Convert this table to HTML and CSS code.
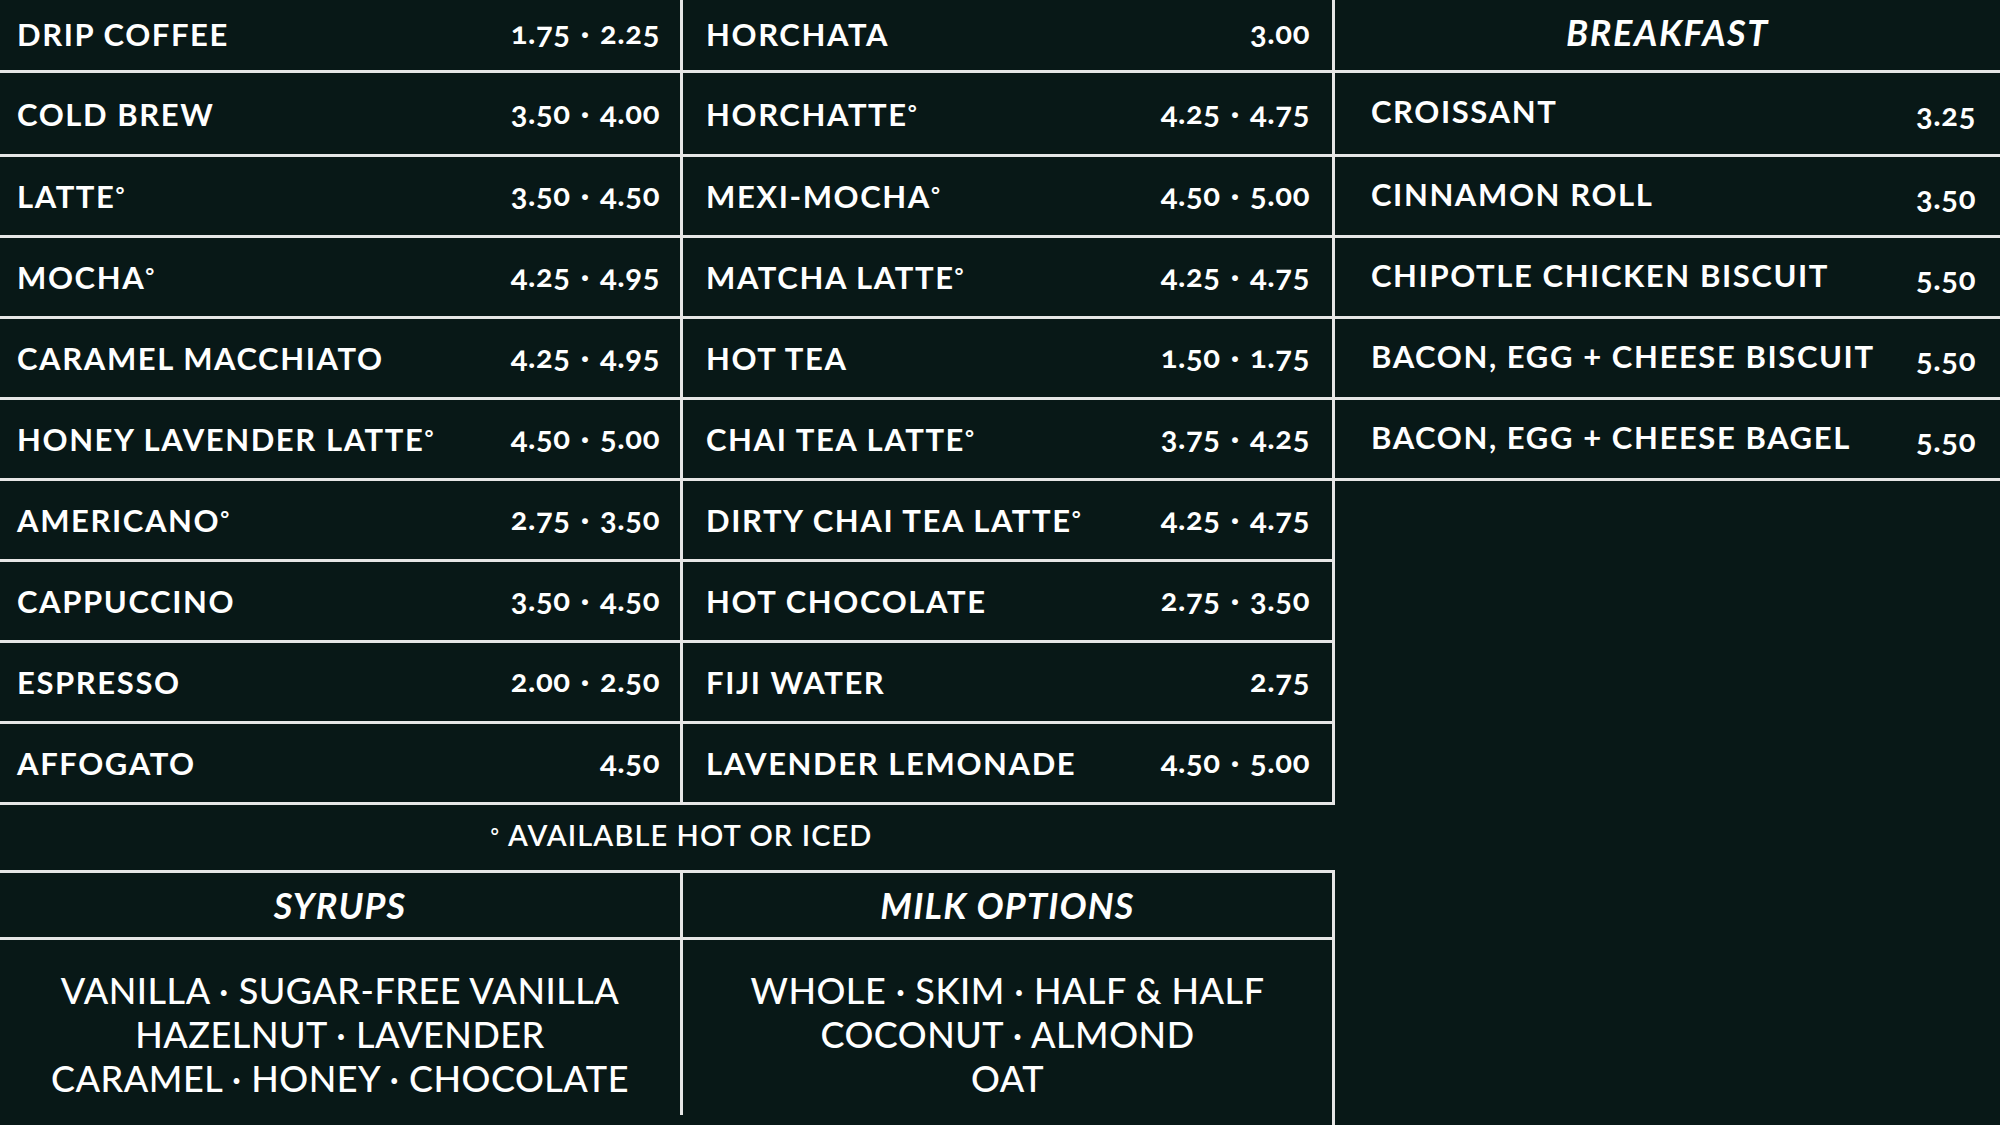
FILE: index.html
```html
<!DOCTYPE html>
<html lang="en">
<head>
<meta charset="utf-8">
<title>Menu Board</title>
<link rel="stylesheet" href="styles.css">
</head>
<body>
<div class="board">
  <div class="left">
    <div class="drinks">
      <div class="col col-a">
        <div class="row"><span class="name">DRIP COFFEE</span><span class="price">1.75 · 2.25</span></div>
        <div class="row"><span class="name">COLD BREW</span><span class="price">3.50 · 4.00</span></div>
        <div class="row"><span class="name">LATTE<span class="deg">°</span></span><span class="price">3.50 · 4.50</span></div>
        <div class="row"><span class="name">MOCHA<span class="deg">°</span></span><span class="price">4.25 · 4.95</span></div>
        <div class="row"><span class="name">CARAMEL MACCHIATO</span><span class="price">4.25 · 4.95</span></div>
        <div class="row"><span class="name">HONEY LAVENDER LATTE<span class="deg">°</span></span><span class="price">4.50 · 5.00</span></div>
        <div class="row"><span class="name">AMERICANO<span class="deg">°</span></span><span class="price">2.75 · 3.50</span></div>
        <div class="row"><span class="name">CAPPUCCINO</span><span class="price">3.50 · 4.50</span></div>
        <div class="row"><span class="name">ESPRESSO</span><span class="price">2.00 · 2.50</span></div>
        <div class="row"><span class="name">AFFOGATO</span><span class="price">4.50</span></div>
      </div>
      <div class="col col-b">
        <div class="row"><span class="name">HORCHATA</span><span class="price">3.00</span></div>
        <div class="row"><span class="name">HORCHATTE<span class="deg">°</span></span><span class="price">4.25 · 4.75</span></div>
        <div class="row"><span class="name">MEXI-MOCHA<span class="deg">°</span></span><span class="price">4.50 · 5.00</span></div>
        <div class="row"><span class="name">MATCHA LATTE<span class="deg">°</span></span><span class="price">4.25 · 4.75</span></div>
        <div class="row"><span class="name">HOT TEA</span><span class="price">1.50 · 1.75</span></div>
        <div class="row"><span class="name">CHAI TEA LATTE<span class="deg">°</span></span><span class="price">3.75 · 4.25</span></div>
        <div class="row"><span class="name">DIRTY CHAI TEA LATTE<span class="deg">°</span></span><span class="price">4.25 · 4.75</span></div>
        <div class="row"><span class="name">HOT CHOCOLATE</span><span class="price">2.75 · 3.50</span></div>
        <div class="row"><span class="name">FIJI WATER</span><span class="price">2.75</span></div>
        <div class="row"><span class="name">LAVENDER LEMONADE</span><span class="price">4.50 · 5.00</span></div>
      </div>
    </div>
    <div class="note"><span class="note-deg">°</span>AVAILABLE HOT OR ICED</div>
    <div class="options">
      <div class="opt opt-syrups">
        <div class="opt-head">SYRUPS</div>
        <div class="opt-body">VANILLA · SUGAR-FREE VANILLA<br>HAZELNUT · LAVENDER<br>CARAMEL · HONEY · CHOCOLATE</div>
      </div>
      <div class="opt opt-milk">
        <div class="opt-head">MILK OPTIONS</div>
        <div class="opt-body">WHOLE · SKIM · HALF &amp; HALF<br>COCONUT · ALMOND<br>OAT</div>
      </div>
    </div>
  </div>
  <div class="right">
    <div class="bf-head">BREAKFAST</div>
    <div class="row bf-row"><span class="name">CROISSANT</span><span class="price">3.25</span></div>
    <div class="row bf-row"><span class="name">CINNAMON ROLL</span><span class="price">3.50</span></div>
    <div class="row bf-row"><span class="name">CHIPOTLE CHICKEN BISCUIT</span><span class="price">5.50</span></div>
    <div class="row bf-row"><span class="name">BACON, EGG + CHEESE BISCUIT</span><span class="price">5.50</span></div>
    <div class="row bf-row"><span class="name">BACON, EGG + CHEESE BAGEL</span><span class="price">5.50</span></div>
  </div>
</div>
</body>
</html>
```

FILE: styles.css
```css
* { box-sizing: border-box; }

html, body {
  margin: 0;
  padding: 0;
  background: #081817;
}

.board {
  display: flex;
  width: 2000px;
  height: 1125px;
  overflow: hidden;
  background: #081817;
  color: #ffffff;
  font-family: Lato, "Open Sans", "Liberation Sans", sans-serif;
}

.left {
  width: 1335px;
  display: flex;
  flex-direction: column;
}

.drinks {
  display: flex;
}

.col {
  display: flex;
  flex-direction: column;
  border-right: 3px solid #e6e6e6;
}

.col-a { width: 683px; }
.col-b { width: 652px; }

.row {
  display: flex;
  justify-content: space-between;
  align-items: center;
  height: 81px;
  border-bottom: 3px solid #e6e6e6;
}

.row:first-child { height: 73px; padding-bottom: 3px; }
.row:nth-child(2) { height: 84px; }

.col-a .row { padding-left: 17px; padding-right: 20px; }
.col-b .row { padding-left: 23px; padding-right: 22px; }

.name {
  font-size: 31px;
  font-weight: 700;
  letter-spacing: 1.6px;
  white-space: nowrap;
}

.deg {
  font-size: 0.7em;
  vertical-align: 0.3em;
  line-height: 0;
  letter-spacing: 0;
}

.price {
  font-size: 31px;
  font-weight: 700;
  letter-spacing: 0.6px;
  word-spacing: 2px;
  white-space: nowrap;
  font-variant-numeric: oldstyle-nums;
  margin-top: -4px;
}

.note {
  height: 65px;
  display: flex;
  align-items: center;
  justify-content: center;
  padding-left: 28px;
  padding-bottom: 6px;
  font-size: 29px;
  font-weight: 600;
  letter-spacing: 1.1px;
}

.note-deg {
  font-size: 0.7em;
  vertical-align: 0.35em;
  line-height: 0;
  margin-right: 8px;
}

.options {
  display: flex;
  align-items: flex-start;
  height: 255px;
  border-top: 3px solid #e6e6e6;
}

.opt-syrups {
  width: 683px;
  height: 242px;
  border-right: 3px solid #e6e6e6;
}

.opt-milk {
  width: 652px;
  height: 252px;
  border-right: 3px solid #e6e6e6;
}

.opt-head {
  height: 67px;
  display: flex;
  align-items: center;
  justify-content: center;
  border-bottom: 3px solid #e6e6e6;
  font-size: 36px;
  font-weight: 700;
  font-style: italic;
  letter-spacing: 1.2px;
}

.opt-body {
  padding-top: 28px;
  text-align: center;
  font-size: 36px;
  font-weight: 500;
  line-height: 44px;
  letter-spacing: 0.5px;
}

.right {
  width: 665px;
  display: flex;
  flex-direction: column;
}

.bf-head {
  height: 73px;
  display: flex;
  align-items: center;
  justify-content: center;
  border-bottom: 3px solid #e6e6e6;
  font-size: 36px;
  font-weight: 700;
  font-style: italic;
  letter-spacing: 1.6px;
  padding-bottom: 6px;
}

.right .bf-row:nth-child(2) { height: 84px; padding-bottom: 0; }
.right .bf-row:first-child { height: 81px; }

.right .bf-row { padding-left: 36px; padding-right: 24px; }
.right .bf-row .name { margin-top: -5px; }
.right .bf-row .price { margin-top: 1px; }
```
